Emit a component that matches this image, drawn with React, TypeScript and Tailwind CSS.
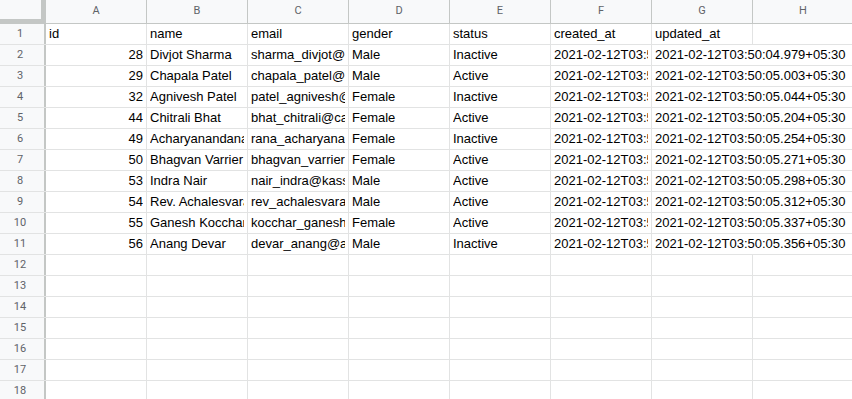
import React from "react";

type Person = {
  id: number;
  name: string;
  email: string;
  gender: string;
  status: string;
  stamp: string;
};

const people: Person[] = [
  { id: 28, name: "Divjot Sharma", email: "sharma_divjot@bechtelar.io", gender: "Male", status: "Inactive", stamp: "04.979" },
  { id: 29, name: "Chapala Patel", email: "chapala_patel@lemke.org", gender: "Male", status: "Active", stamp: "05.003" },
  { id: 32, name: "Agnivesh Patel", email: "patel_agnivesh@hills.com", gender: "Female", status: "Inactive", stamp: "05.044" },
  { id: 44, name: "Chitrali Bhat", email: "bhat_chitrali@carroll.biz", gender: "Female", status: "Active", stamp: "05.204" },
  { id: 49, name: "Acharyanandana Rana", email: "rana_acharyanandana@mraz.net", gender: "Female", status: "Inactive", stamp: "05.254" },
  { id: 50, name: "Bhagvan Varrier", email: "bhagvan_varrier@ward.co", gender: "Female", status: "Active", stamp: "05.271" },
  { id: 53, name: "Indra Nair", email: "nair_indra@kassulke.org", gender: "Male", status: "Active", stamp: "05.298" },
  { id: 54, name: "Rev. Achalesvara Pillai", email: "rev_achalesvara_pillai@yost.io", gender: "Male", status: "Active", stamp: "05.312" },
  { id: 55, name: "Ganesh Kocchar", email: "kocchar_ganesh@stark.info", gender: "Female", status: "Active", stamp: "05.337" },
  { id: 56, name: "Anang Devar", email: "devar_anang@abbott.com", gender: "Male", status: "Inactive", stamp: "05.356" },
];

const letters = ["A", "B", "C", "D", "E", "F", "G", "H"];
const headings = ["id", "name", "email", "gender", "status", "created_at", "updated_at", ""];

// text is clipped inside the padding, like the sheet does
function Cell({ children, right = false }: { children?: React.ReactNode; right?: boolean }) {
  return (
    <div className="flex h-full w-[101px] shrink-0 items-center border-r border-[#e2e3e3] bg-white px-[3px]">
      <div className={`w-full overflow-hidden whitespace-nowrap ${right ? "text-right" : ""}`}>{children}</div>
    </div>
  );
}

function RowNumber({ n }: { n: number }) {
  return (
    <div className="flex h-full w-[46px] shrink-0 items-center justify-center border-r-2 border-[#c4c7c5] bg-[#f8f9fa] pr-[4px] font-['Roboto',sans-serif] text-[11px] text-[#5f6368]">
      {n}
    </div>
  );
}

export default function App() {
  return (
    <div className="h-[399px] w-[852px] overflow-hidden bg-white font-['Liberation_Sans',Arial,sans-serif] text-[13px] text-black">
      <div className="flex h-[24px]">
        <div className="h-full w-[46px] shrink-0 border-r-[5px] border-b-[5px] border-[#c4c7c5] bg-[#f8f9fa]" />
        {letters.map((l) => (
          <div
            key={l}
            className="flex h-full w-[101px] shrink-0 items-center justify-center border-r border-b border-[#c4c7c5] bg-[#f8f9fa] font-['Roboto',sans-serif] text-[11px] text-[#5f6368]"
          >
            {l}
          </div>
        ))}
      </div>

      <div className="flex h-[21px] border-b border-[#e2e3e3]">
        <RowNumber n={1} />
        {headings.map((h, i) => (
          <Cell key={i}>{h}</Cell>
        ))}
      </div>

      {people.map((p, i) => {
        const time = `2021-02-12T03:50:${p.stamp}+05:30`;
        return (
          <div key={p.id} className="flex h-[21px] border-b border-[#e2e3e3]">
            <RowNumber n={i + 2} />
            <Cell right>{p.id}</Cell>
            <Cell>{p.name}</Cell>
            <Cell>{p.email}</Cell>
            <Cell>{p.gender}</Cell>
            <Cell>{p.status}</Cell>
            <Cell>{time}</Cell>
            {/* G spills over the empty H cell */}
            <div className="flex h-full w-[101px] shrink-0 items-center whitespace-nowrap px-[3px]">{time}</div>
            <div className="h-full w-[101px] shrink-0" />
          </div>
        );
      })}

      {[12, 13, 14, 15, 16, 17, 18].map((n) => (
        <div key={n} className="flex h-[21px] border-b border-[#e2e3e3]">
          <RowNumber n={n} />
          {letters.map((l) => (
            <Cell key={l} />
          ))}
        </div>
      ))}
    </div>
  );
}
